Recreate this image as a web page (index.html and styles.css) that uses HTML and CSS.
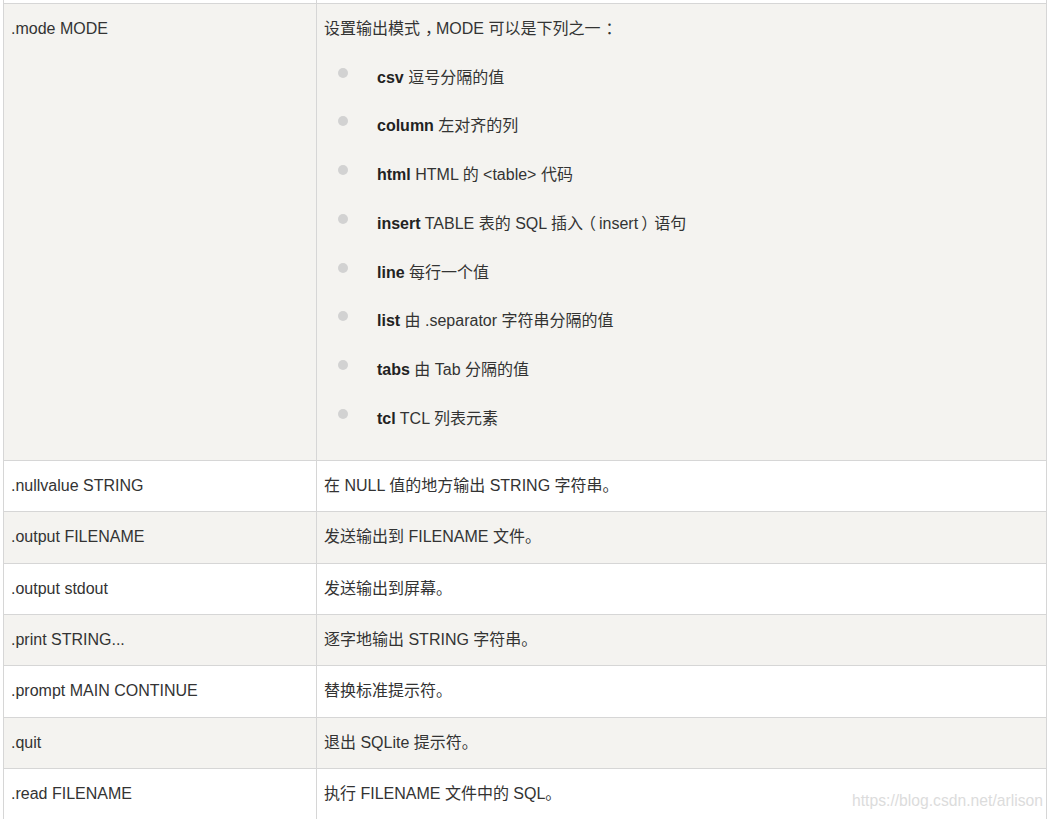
FILE: index.html
```html
<!DOCTYPE html>
<html lang="zh">
<head>
<meta charset="utf-8">
<title>SQLite 点命令</title>
<link rel="stylesheet" href="styles.css">
</head>
<body>
<div class="page">
<table class="cmd-table">
  <colgroup><col class="col-cmd"><col class="col-desc"></colgroup>
  <tbody>
    <tr class="row-prev"><td></td><td></td></tr>
    <tr class="row-alt">
      <td>.mode MODE</td>
      <td>
        <p class="intro">设置输出模式<span class="p-mid">，</span>MODE 可以是下列之一<span class="p-mid">：</span></p>
        <ul class="modes">
          <li><b>csv</b> 逗号分隔的值</li>
          <li><b>column</b> 左对齐的列</li>
          <li><b>html</b> HTML 的 &lt;table&gt; 代码</li>
          <li><b>insert</b> TABLE 表的 SQL 插入<span class="p-open">（</span>insert<span class="p-close">）</span>语句</li>
          <li><b>line</b> 每行一个值</li>
          <li><b>list</b> 由 .separator 字符串分隔的值</li>
          <li><b>tabs</b> 由 Tab 分隔的值</li>
          <li><b>tcl</b> TCL 列表元素</li>
        </ul>
      </td>
    </tr>
    <tr><td>.nullvalue STRING</td><td>在 NULL 值的地方输出 STRING 字符串。</td></tr>
    <tr class="row-alt"><td>.output FILENAME</td><td>发送输出到 FILENAME 文件。</td></tr>
    <tr><td>.output stdout</td><td>发送输出到屏幕。</td></tr>
    <tr class="row-alt"><td>.print STRING...</td><td>逐字地输出 STRING 字符串。</td></tr>
    <tr><td>.prompt MAIN CONTINUE</td><td>替换标准提示符。</td></tr>
    <tr class="row-alt"><td>.quit</td><td>退出 SQLite 提示符。</td></tr>
    <tr><td>.read FILENAME</td><td>执行 FILENAME 文件中的 SQL。</td></tr>
  </tbody>
</table>
<div class="watermark">https://blog.csdn.net/arlison</div>
</div>
</body>
</html>
```
FILE: styles.css
```css
html, body {
  margin: 0;
  padding: 0;
  background: #ffffff;
}
body {
  font-family: "Liberation Sans", Arial, "Noto Sans CJK SC", sans-serif;
  font-size: 16px;
  color: #333333;
  overflow: hidden;
}
.page {
  position: relative;
  height: 819px;
  padding-left: 3px;
  overflow: hidden;
}
.cmd-table {
  border-collapse: collapse;
  table-layout: fixed;
  width: 1044px;
}
.col-cmd { width: 313px; }
.cmd-table td {
  border: 1px solid #d6d6d6;
  padding: 13px 7px;
  line-height: 24.33px;
  vertical-align: top;
  text-align: left;
  background: #ffffff;
}
.cmd-table .row-prev td {
  padding: 0;
  height: 3px;
  line-height: 0;
  border-top: none;
}
.cmd-table .row-alt td {
  background: #f4f3f0;
}
.intro {
  margin: 0;
}
/* full-width punctuation drawn centred in its em box, as in the reference */
.p-mid,
.p-open,
.p-close {
  font-feature-settings: "halt" 1;
}
.p-mid { padding: 0 3px 0 5px; }
.p-open { padding: 0 3px 0 5px; }
.p-close { padding: 0 5px 0 3px; }
.modes {
  list-style: none;
  margin: 0 0 16px 0;
  padding: 0 0 0 53px;
}
.modes li {
  position: relative;
  margin-top: 24.4px;
}
.modes li::before {
  content: "";
  position: absolute;
  left: -39px;
  top: 2px;
  width: 10px;
  height: 10px;
  border-radius: 50%;
  background: #d2d2d2;
}
.modes b {
  font-weight: bold;
  color: #222;
}
.watermark {
  position: absolute;
  right: 9px;
  bottom: 8px;
  font-size: 15.7px;
  color: #dcdcdc;
  line-height: 20px;
}
```
